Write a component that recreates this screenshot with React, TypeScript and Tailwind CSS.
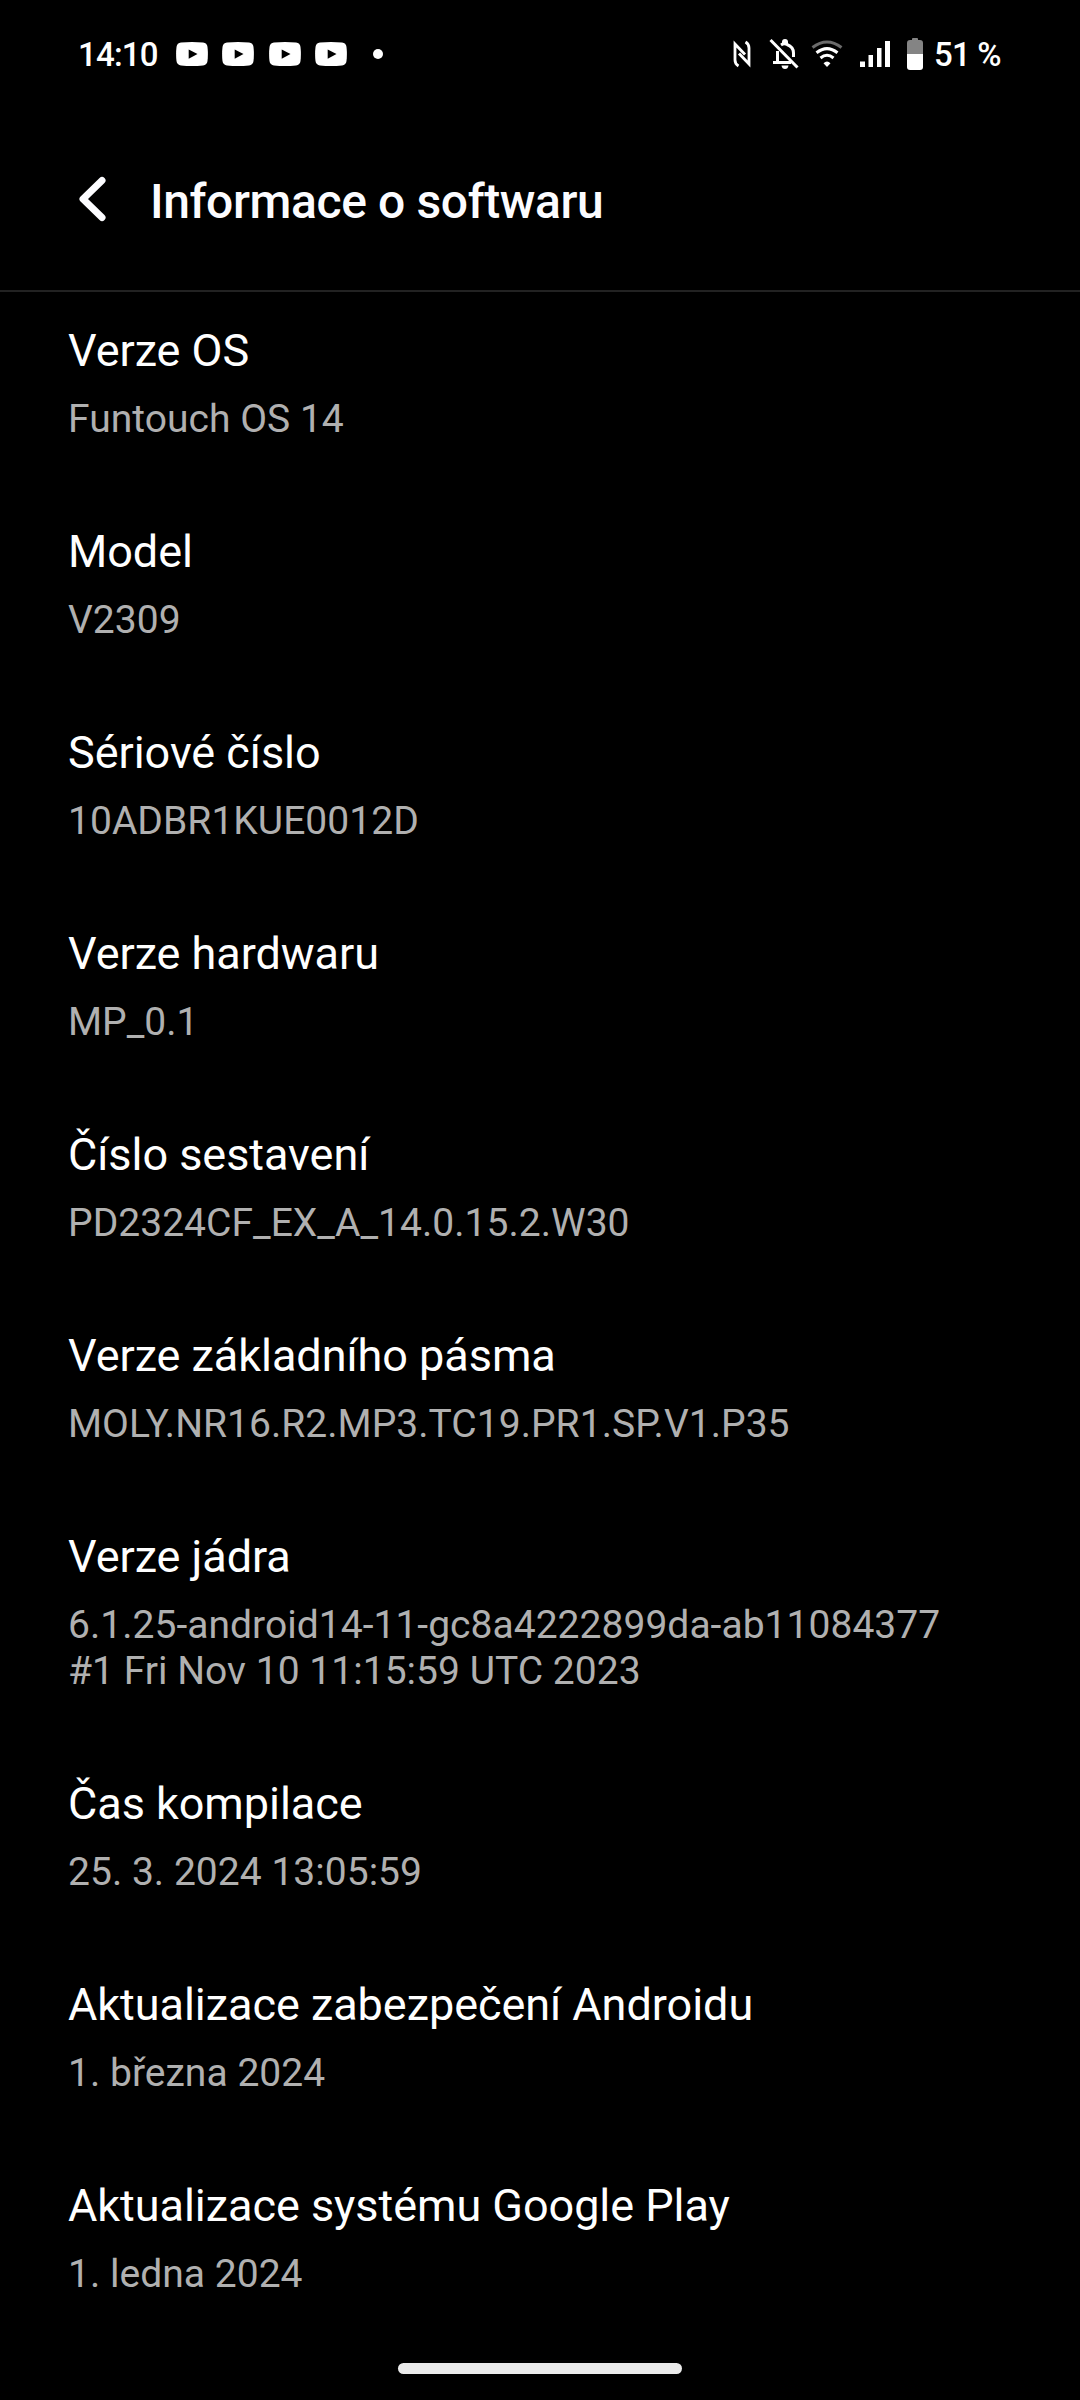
const items = [
    { title: "Verze OS", lines: ["Funtouch OS 14"] },
    { title: "Model", lines: ["V2309"] },
    { title: "Sériové číslo", lines: ["10ADBR1KUE0012D"] },
    { title: "Verze hardwaru", lines: ["MP_0.1"] },
    { title: "Číslo sestavení", lines: ["PD2324CF_EX_A_14.0.15.2.W30"] },
    { title: "Verze základního pásma", lines: ["MOLY.NR16.R2.MP3.TC19.PR1.SP.V1.P35"] },
    { title: "Verze jádra", lines: ["6.1.25-android14-11-gc8a4222899da-ab11084377", "#1 Fri Nov 10 11:15:59 UTC 2023"] },
    { title: "Čas kompilace", lines: ["25. 3. 2024 13:05:59"] },
    { title: "Aktualizace zabezpečení Androidu", lines: ["1. března 2024"] },
    { title: "Aktualizace systému Google Play", lines: ["1. ledna 2024"] },
];

const YouTubeIcon = () => (
    <svg width="32" height="24" viewBox="0 0 32 24">
        <path d="M5 .6Q16-.4 27 .6Q31 1 31.500 5Q32.300 12 31.500 19Q31 23 27 23.400Q16 24.400 5 23.400Q1 23 .5 19Q-.3 12 .5 5Q1 1 5 .6Z" fill="#fff" />
        <path d="M12.700 7.500L21.500 12L12.700 16.700Z" fill="#000" />
    </svg>
);

const NfcIcon = () => (
    <svg width="18" height="28" viewBox="0 0 18 28" fill="none" stroke="#fff" strokeWidth="2.800">
        <path d="M5.500 26Q2 24 2 20V4L12 14.500" />
        <path d="M12.500 2Q16 4 16 8V24L6 13.500" />
    </svg>
);

const BellOffIcon = () => (
    <svg width="30" height="32" viewBox="0 0 30 32" fill="none" stroke="#fff" strokeWidth="3">
        <path d="M8.500 24.500V13M4 24.500H22" />
        <path d="M12 7Q15 5 18 6.500Q24.500 9 24.500 15V19" />
        <path d="M13 4Q13 1 16 1Q19 1 19 4V6H13Z" fill="#fff" stroke="none" />
        <path d="M12.500 27.500H19.500Q19 31 16 31Q13 31 12.500 27.500Z" fill="#fff" stroke="none" />
        <path d="M1.500 2L28.500 29.500" />
    </svg>
);

const WifiIcon = () => (
    <svg width="32" height="28" viewBox="0 0 32 28" fill="none" stroke="#fff" strokeWidth="3">
        <path d="M1.500 7.500Q16-3.500 30.500 7.500" stroke="#6b6b6b" />
        <path d="M5.500 12.800Q16 4.500 26.500 12.800" />
        <path d="M9.500 18Q16 12.500 22.500 18" />
        <path d="M12.500 23.300Q16 19.500 19.500 23.300L16 27Z" fill="#fff" stroke="none" />
    </svg>
);

const SignalIcon = () => (
    <svg width="30" height="28" viewBox="0 0 30 28" fill="#fff">
        <rect x="0" y="21.500" width="5" height="5.500" />
        <rect x="8.500" y="15" width="4.500" height="12" />
        <rect x="17" y="8" width="4.500" height="19" />
        <rect x="25" y="1" width="5" height="26" />
    </svg>
);

const BatteryIcon = () => (
    <svg width="16" height="32" viewBox="0 0 16 32">
        <path d="M5 2V1Q5 0 6 0H10Q11 0 11 1V2H13Q16 2 16 5V16H0V5Q0 2 3 2Z" fill="#848484" />
        <path d="M0 16H16V29Q16 32 13 32H3Q0 32 0 29Z" fill="#fff" />
    </svg>
);

const StatusBar = () => (
    <div className="flex h-[108px] items-center justify-between pr-[78px] pl-[78px] text-[33px] leading-none font-medium">
        <div className="flex items-center">
            <span className="w-[98px] pt-px tracking-[-0.800px]">14:10</span>
            <div className="flex gap-[14.400px]">
                {[0, 1, 2, 3].map((n) => (
                    <YouTubeIcon key={n} />
                ))}
            </div>
            <div className="ml-[26px] h-[10px] w-[10px] rounded-full bg-white" />
        </div>
        <div className="flex items-center">
            <NfcIcon />
            <div className="w-[18px]" />
            <BellOffIcon />
            <div className="w-[12px]" />
            <WifiIcon />
            <div className="w-[17px]" />
            <SignalIcon />
            <div className="w-[17px]" />
            <BatteryIcon />
            <span className="ml-[11px] w-[68px] pt-px tracking-[-0.800px] whitespace-nowrap">51 %</span>
        </div>
    </div>
);

const Header = () => (
    <header className="flex h-[184px] items-center border-b-2 border-[#222222] pl-[78px]">
        <svg width="28" height="46" viewBox="0 0 28 46" fill="none" stroke="#fcfcff" strokeWidth="7" strokeLinecap="round" strokeLinejoin="round">
            <path d="M24 4.500L5 23L24 41.500" />
        </svg>
        <h1 className="ml-[44px] pt-[6px] text-[48px] leading-[56px] font-medium tracking-[-0.380px] text-[#fcfcff]">Informace o softwaru</h1>
    </header>
);

const App = () => {
    return (
        <div className="flex h-[2400px] w-[1080px] flex-col overflow-hidden bg-black font-['Roboto',sans-serif] text-white">
            <StatusBar />
            <Header />
            <main className="flex flex-1 flex-col gap-[83px] px-[68px] pt-[32px]">
                {items.map((item) => (
                    <section key={item.title}>
                        <h2 className="text-[45px] leading-[54px] tracking-[-0.045px] whitespace-nowrap">{item.title}</h2>
                        <div className="mt-[18px] text-[39px] leading-[46px] tracking-[0.030px] whitespace-nowrap text-[#b0b0b0]">
                            {item.lines.map((line) => (
                                <p key={line}>{line}</p>
                            ))}
                        </div>
                    </section>
                ))}
            </main>
            <div className="mb-[26px] h-[11px] w-[284px] shrink-0 self-center rounded-full bg-[#ebebeb]" />
        </div>
    );
};

export default App;
